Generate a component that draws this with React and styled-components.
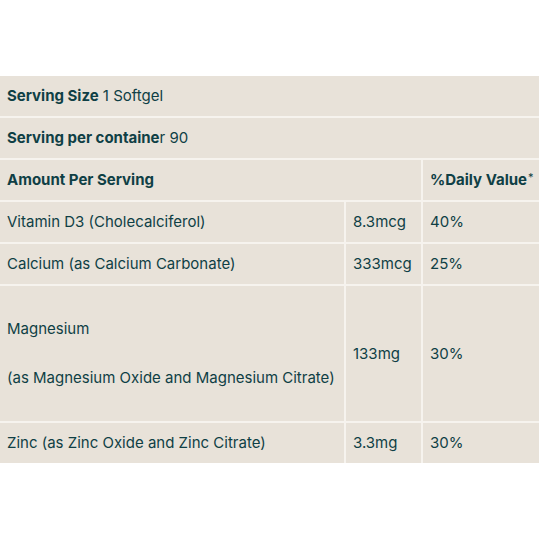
import React from "react";
import styled, { createGlobalStyle } from "styled-components";

const Global = createGlobalStyle`
  html, body { margin: 0; padding: 0; background: #ffffff; }
  body { font-family: Inter, "Noto Sans", sans-serif; }
`;

const Page = styled.div`
  width: 540px;
  padding-top: 76px;
  box-sizing: border-box;
`;

const Table = styled.div`
  display: grid;
  grid-template-columns: 344px 75px 116px;
  gap: 2px;
  width: 539px;
  background: #f6f3ee;
  box-sizing: border-box;
  color: #0f3f45;
  font-size: 15px;
  line-height: 20px;
`;

const Cell = styled.div`
  background: #e8e2d9;
  padding: 10px 7px;
  grid-column: ${(p) => p.$span || "auto"};
  display: flex;
  flex-direction: column;
  justify-content: center;
  font-weight: ${(p) => (p.$bold ? 700 : 400)};
  white-space: nowrap;
`;

const Line = styled.p`
  margin: ${(p) => p.$m || "0"};
`;

const B = styled.strong`
  font-weight: 700;
`;

const Star = styled.span`
  font-size: 11px;
  font-weight: 400;
  vertical-align: 4px;
  line-height: 0;
  margin-left: 1px;
`;

const rows = [
  ["Vitamin D3 (Cholecalciferol)", "8.3mcg", "40%"],
  ["Calcium (as Calcium Carbonate)", "333mcg", "25%"],
];

export default function App() {
  return (
    <>
      <Global />
      <Page>
        <Table>
          <Cell $span="1 / 4">
            <span>
              <B>Serving Size</B> 1 Softgel
            </span>
          </Cell>
          <Cell $span="1 / 4">
            <span>
              <B>Serving per containe</B>r 90
            </span>
          </Cell>
          <Cell $span="1 / 3" $bold>
            Amount Per Serving
          </Cell>
          <Cell $bold>
            <span>
              %Daily Value<Star>*</Star>
            </span>
          </Cell>
          {rows.map((r) => (
            <React.Fragment key={r[0]}>
              <Cell>{r[0]}</Cell>
              <Cell>{r[1]}</Cell>
              <Cell>{r[2]}</Cell>
            </React.Fragment>
          ))}
          <Cell>
            <Line $m="23px 0 0">Magnesium</Line>
            <Line $m="29px 0 23px">(as Magnesium Oxide and Magnesium Citrate)</Line>
          </Cell>
          <Cell>133mg</Cell>
          <Cell>30%</Cell>
          <Cell>Zinc (as Zinc Oxide and Zinc Citrate)</Cell>
          <Cell>3.3mg</Cell>
          <Cell>30%</Cell>
        </Table>
      </Page>
    </>
  );
}
